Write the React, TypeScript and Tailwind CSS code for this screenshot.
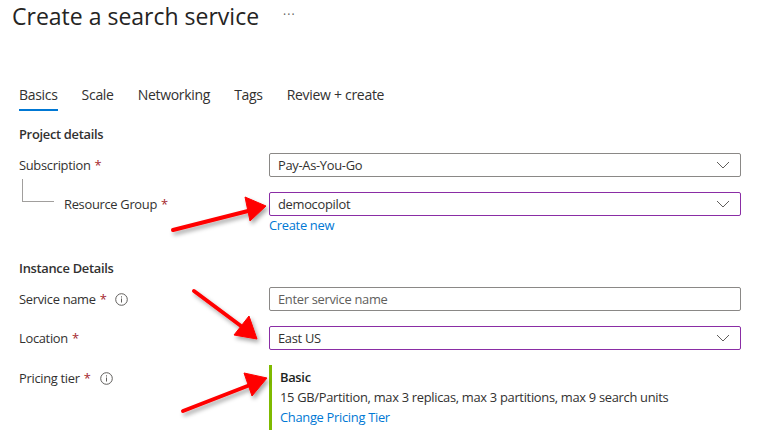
import React from 'react';

const Chevron = () => (
  <svg width="14" height="8" viewBox="0 0 14 8" className="shrink-0">
    <path d="M1 1 L7 7 L13 1" fill="none" stroke="#605e5c" strokeWidth="1" />
  </svg>
);

const InfoIcon = () => (
  <svg width="13" height="13" viewBox="0 0 13 13" className="ml-[9px]">
    <circle cx="6.5" cy="6.5" r="5.8" fill="none" stroke="#605e5c" strokeWidth="1" />
    <rect x="6" y="5.5" width="1" height="4" fill="#605e5c" />
    <rect x="6" y="3.3" width="1" height="1.2" fill="#605e5c" />
  </svg>
);

const Req = () => <span className="text-[#a4262c] ml-[4px]">*</span>;

const Select = ({ value, purple }: { value: string; purple?: boolean }) => (
  <div
    className={`h-[24px] w-[472px] flex items-center justify-between pl-[8px] pr-[10px] rounded-[2px] border ${
      purple ? 'border-[#8a2da5]' : 'border-[#8a8886]'
    }`}
  >
    <span>{value}</span>
    <Chevron />
  </div>
);

const Row = ({ label, children }: { label: React.ReactNode; children: React.ReactNode }) => (
  <div className="grid grid-cols-[250px_472px] items-start">
    <div className="h-[24px] flex items-center">{label}</div>
    <div>{children}</div>
  </div>
);

const tabs = ['Basics', 'Scale', 'Networking', 'Tags', 'Review + create'];

export default function App() {
  return (
    <div className="relative w-[762px] h-[435px] bg-white overflow-hidden text-[12.9px] tracking-[-0.3px] leading-5 text-[#323130] font-['Segoe_UI','Open_Sans',sans-serif]">
      <div className="flex items-center h-[32px] pl-[12px]">
        <h1 className="text-[23px] tracking-normal leading-8 text-[#252423]">Create a search service</h1>
        <span className="ml-[24px] text-[12px] text-[#605e5c] tracking-[1px] -mt-[2px]">···</span>
      </div>

      <div className="flex gap-[24px] pl-[19px] mt-[53px] text-[14px]">
        {tabs.map((t, i) => (
          <div
            key={t}
            className={`pb-[4px] border-b-2 ${i === 0 ? 'border-[#0078d4]' : 'border-transparent'}`}
          >
            {t}
          </div>
        ))}
      </div>

      <div className="pl-[19px]">
        <h2 className="mt-[13px] font-semibold">Project details</h2>

        <div className="mt-[9px]">
          <Row label={<span>Subscription<Req /></span>}>
            <Select value="Pay-As-You-Go" />
          </Row>
        </div>

        <div className="mt-[15px]">
          <Row
            label={
              <div className="flex items-start h-[24px]">
                <div className="ml-[3px] -mt-[13px] w-[32px] h-[23px] border-l border-b border-[#a19f9d]" />
                <span className="ml-[10px] self-center">Resource Group<Req /></span>
              </div>
            }
          >
            <Select value="democopilot" purple />
            <div className="mt-[1px] leading-4 text-[#0078d4]">Create new</div>
          </Row>
        </div>

        <h2 className="mt-[25px] font-semibold">Instance Details</h2>

        <div className="mt-[9px]">
          <Row label={<span className="flex items-center">Service name<Req /><InfoIcon /></span>}>
            <div className="h-[24px] w-[472px] flex items-center pl-[8px] rounded-[2px] border border-[#8a8886] text-[#605e5c]">
              Enter service name
            </div>
          </Row>
        </div>

        <div className="mt-[15px]">
          <Row label={<span>Location<Req /></span>}>
            <Select value="East US" purple />
          </Row>
        </div>

        <div className="mt-[15px]">
          <Row
            label={
              <span className="flex items-center mt-[2px]">
                Pricing tier<Req /><InfoIcon />
              </span>
            }
          >
            <div className="border-l-[3px] border-[#7fba00] pl-[8px] pt-[2px] pb-[3px]">
              <div className="font-semibold text-[#201f1e]">Basic</div>
              <div>15 GB/Partition, max 3 replicas, max 3 partitions, max 9 search units</div>
              <div className="text-[#0078d4]">Change Pricing Tier</div>
            </div>
          </Row>
        </div>
      </div>

      <svg className="absolute inset-0 pointer-events-none" width="762" height="435">
        <defs>
          <filter id="sh" x="-20%" y="-20%" width="140%" height="140%">
            <feDropShadow dx="2" dy="3" stdDeviation="2" floodColor="#000" floodOpacity="0.35" />
          </filter>
        </defs>
        <g filter="url(#sh)" fill="#ff0000" stroke="#ff0000">
          <line x1="173" y1="230" x2="248" y2="211" strokeWidth="4" strokeLinecap="round" />
          <polygon points="266,206 245,197 250,221" strokeWidth="1" />
          <line x1="194" y1="291" x2="241" y2="326" strokeWidth="4" strokeLinecap="round" />
          <polygon points="257,339 234,335 249,316" strokeWidth="1" />
          <line x1="183" y1="411" x2="250" y2="385" strokeWidth="4" strokeLinecap="round" />
          <polygon points="267,378 244,373 252,396" strokeWidth="1" />
        </g>
      </svg>
    </div>
  );
}
